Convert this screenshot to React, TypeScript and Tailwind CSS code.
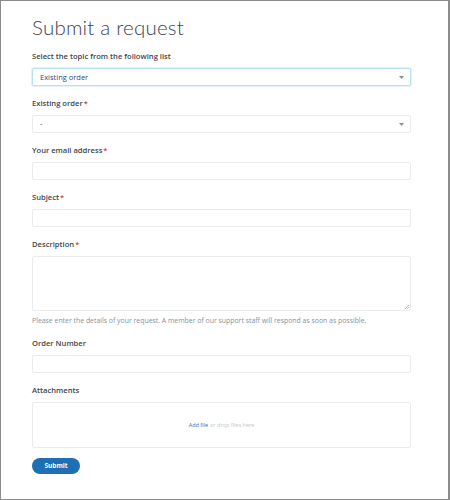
import React from 'react';

const Label: React.FC<{ text: string; required?: boolean }> = ({ text, required }) => (
  <div className="h-[12px] leading-[12px] text-[7.6px] font-semibold text-[#3c464e] mb-[6px]">
    {text}
    {required && <span className="text-[#e03b3b] ml-[1px]">*</span>}
  </div>
);

const Caret: React.FC = () => (
  <svg className="absolute right-[6px] top-[7px]" width="5" height="3" viewBox="0 0 5 3">
    <path d="M0 0 L5 0 L2.5 3 Z" fill="#8a8f96" />
  </svg>
);

const Input: React.FC = () => (
  <div className="h-[18px] border border-[#e9ebed] rounded-[2px] bg-white mb-[11px]" />
);

const App: React.FC = () => {
  return (
    <div
      className="w-[450px] h-[500px] border border-[#8c8c8c] border-r-2 bg-white overflow-hidden"
      style={{ fontFamily: '"Open Sans", sans-serif' }}
    >
      <div className="pl-[31px] pr-[37px] pt-[13px] flex flex-col">
        <h1
          className="text-[20.5px] leading-[24px] font-light text-[#3b4456] pt-[1px] mb-[11px] tracking-[0.2px]"
          style={{ fontFamily: 'Lato, sans-serif' }}
        >
          Submit a request
        </h1>

        <Label text="Select the topic from the following list" />
        <div className="relative h-[18px] border border-[#b9e2ef] rounded-[2px] bg-white mb-[11px] px-[7px] text-[7.5px] leading-[16px] text-[#2c4a7a] shadow-[0_0_0_1px_#e3f3f8]">
          Existing order
          <Caret />
        </div>

        <Label text="Existing order" required />
        <div className="relative h-[18px] border border-[#e9ebed] rounded-[2px] bg-white mb-[11px] px-[7px] text-[7.5px] leading-[15px] text-[#555]">
          -
          <Caret />
        </div>

        <Label text="Your email address" required />
        <Input />

        <Label text="Subject" required />
        <Input />

        <Label text="Description" required />
        <div className="relative h-[55px] border border-[#e9ebed] rounded-[2px] bg-white mb-[4px]">
          <svg className="absolute right-[1px] bottom-[1px]" width="5" height="5" viewBox="0 0 5 5">
            <path d="M1 5 L5 1 M3 5 L5 3" stroke="#a0a4a8" strokeWidth="0.7" />
          </svg>
        </div>
        <div className="h-[12px] leading-[12px] text-[6.9px] text-[#87929d] mb-[10px]">
          Please enter the details of your request. A member of our support staff will respond as soon as possible.
        </div>

        <Label text="Order Number" />
        <Input />

        <Label text="Attachments" />
        <div className="h-[46px] border border-[#e9ebed] rounded-[2px] bg-white mb-[10px] flex items-center justify-center text-[5.5px]">
          <span className="text-[#1f73b7]">Add file</span>
          <span className="text-[#c2c8cc] ml-[2px]">or drop files here</span>
        </div>

        <button className="w-[48px] h-[16px] rounded-full bg-[#1f6fb5] text-white text-[6.5px] font-bold flex items-center justify-center">
          Submit
        </button>
      </div>
    </div>
  );
};

export default App;
